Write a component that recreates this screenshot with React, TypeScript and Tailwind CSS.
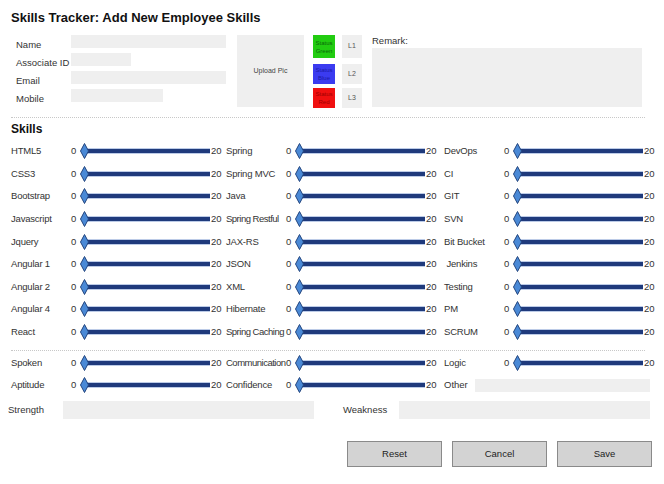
const font = "font-['Liberation_Sans',Arial,sans-serif]";

const skillRows: [string, string, string][] = [
  ['HTML5', 'Spring', 'DevOps'],
  ['CSS3', 'Spring MVC', 'CI'],
  ['Bootstrap', 'Java', 'GIT'],
  ['Javascript', 'Spring Restful', 'SVN'],
  ['Jquery', 'JAX-RS', 'Bit Bucket'],
  ['Angular 1', 'JSON', ' Jenkins'],
  ['Angular 2', 'XML', 'Testing'],
  ['Angular 4', 'Hibernate', 'PM'],
  ['React', 'Spring Caching', 'SCRUM'],
];

// labels that are wider than their column slot get squeezed a little
const longLabels = ['Spring Caching', 'Communication', 'Spring Restful'];

function Slider() {
  return (
    <div className="flex items-center">
      <span className="w-[9px] shrink-0">0</span>
      <svg width="130" height="16" viewBox="0 0 130 16" className="shrink-0">
        <rect x="4" y="5.5" width="126" height="5" fill="#7b97cf" />
        <rect x="4" y="6" width="126" height="4" fill="#1f3a7c" />
        <polygon points="4.5,0.5 8.5,8 4.5,15.5 0.5,8" fill="#4a89d6" stroke="#24467f" strokeWidth="1" />
      </svg>
      <span className="ml-[1px] shrink-0">20</span>
    </div>
  );
}

function SkillCell({ label }: { label: string }) {
  const tight = longLabels.includes(label);
  return (
    <div className="flex items-center">
      <span className={`w-[60px] shrink-0 whitespace-pre ${tight ? 'tracking-[-0.5px]' : 'tracking-[-0.2px]'}`}>{label}</span>
      <Slider />
    </div>
  );
}

function Field({ label, width }: { label: string; width: string }) {
  return (
    <div className="flex items-start h-[18px]">
      <span className="w-[60px] pl-[5px] pt-[3px] leading-[13px] whitespace-nowrap">{label}</span>
      <div className={`h-[13px] bg-[#efefef] ${width}`} />
    </div>
  );
}

export default function App() {
  return (
    <div className={`w-[664px] h-[484px] bg-white text-[#333] text-[9.5px] ${font} px-[11px] pt-[10px]`}>
      <h1 className="text-[13px] leading-[16px] font-bold text-[#111]">
        Skills Tracker: Add New Employee Skills
      </h1>

      {/* Top form */}
      <div className="flex mt-[9px] h-[74px]">
        <div className="w-[215px] shrink-0 flex flex-col">
          <Field label="Name" width="w-[155px]" />
          <Field label="Associate ID" width="w-[60px]" />
          <Field label="Email" width="w-[155px]" />
          <Field label="Mobile" width="w-[92px]" />
        </div>
        <div className="ml-[11px] w-[67px] h-[72px] bg-[#efefef] flex items-center justify-center text-[7px] text-[#444]">
          Upload Pic
        </div>
        <div className="ml-[9px] w-[22px] flex flex-col text-[6px] leading-[8px] text-center">
          <div className="h-[23px] bg-[#22cc11] text-[#0a6a0a] flex items-center justify-center">Status<br />Green</div>
          <div className="h-[20px] mt-[6px] bg-[#3b3bf0] text-[#1a1aa8] flex items-center justify-center">Status<br />Blue</div>
          <div className="h-[20px] mt-[4px] bg-[#f01010] text-[#a00000] flex items-center justify-center">Status<br />Red</div>
        </div>
        <div className="ml-[7px] w-[20px] flex flex-col text-[7px] text-[#555]">
          <div className="h-[23px] bg-[#efefef] flex items-center justify-center">L1</div>
          <div className="h-[20px] mt-[6px] bg-[#efefef] flex items-center justify-center">L2</div>
          <div className="h-[20px] mt-[4px] bg-[#efefef] flex items-center justify-center">L3</div>
        </div>
        <div className="ml-[10px] flex flex-col">
          <span className="leading-[12px] text-[9.5px]">Remark:</span>
          <div className="mt-[1px] w-[270px] h-[59px] bg-[#efefef]" />
        </div>
      </div>

      <div className="mt-[8px] w-[634px] border-t border-dotted border-[#c8c8c8]" />

      <h2 className="mt-[4px] text-[12px] leading-[14px] font-bold text-[#111]">Skills</h2>

      {/* Skill sliders */}
      <div className="mt-[4px] grid grid-cols-[215px_218px_1fr]">
        {skillRows.map((row) =>
          row.map((s, i) => (
            <div key={s + i} className="h-[22.6px] flex items-center">
              <SkillCell label={s} />
            </div>
          ))
        )}
      </div>

      <div className="mt-[7px] w-[634px] border-t border-dotted border-[#c8c8c8]" />

      <div className="mt-[1px] grid grid-cols-[215px_218px_1fr]">
        <div className="h-[22px] flex items-center"><SkillCell label="Spoken" /></div>
        <div className="h-[22px] flex items-center"><SkillCell label="Communication" /></div>
        <div className="h-[22px] flex items-center"><SkillCell label="Logic" /></div>
        <div className="h-[22px] flex items-center"><SkillCell label="Aptitude" /></div>
        <div className="h-[22px] flex items-center"><SkillCell label="Confidence" /></div>
        <div className="h-[22px] flex items-center">
          <span className="w-[31px] shrink-0">Other</span>
          <div className="w-[175px] h-[13px] bg-[#efefef]" />
        </div>
      </div>

      <div className="mt-[5px] flex items-center -ml-[3px]">
        <span className="w-[55px] shrink-0">Strength</span>
        <div className="w-[251px] h-[18px] bg-[#efefef]" />
        <span className="ml-[29px] w-[56px] shrink-0">Weakness</span>
        <div className="w-[251px] h-[18px] bg-[#efefef]" />
      </div>

      <div className="mt-[22px] flex justify-end gap-[10px] pr-[1px] text-[9.5px] text-[#222]">
        {['Reset', 'Cancel', 'Save'].map((b) => (
          <button key={b} className="w-[95px] h-[26px] bg-[#d3d3d3] border border-[#8a8a8a]">
            {b}
          </button>
        ))}
      </div>
    </div>
  );
}
